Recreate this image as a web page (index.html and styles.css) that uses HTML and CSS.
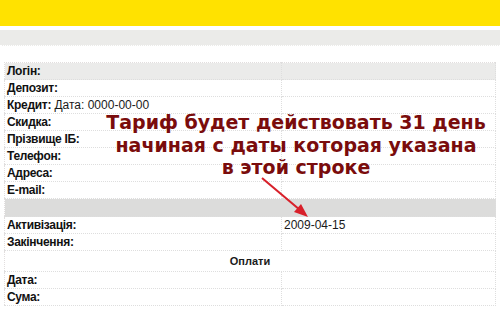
FILE: index.html
```html
<!DOCTYPE html>
<html>
<head>
  <meta charset="utf-8">
  <title></title>
  <link rel="stylesheet" href="styles.css">
</head>
<body>
  <div class="top"></div>
  <div class="bar"></div>

  <div class="wrap">
    <table class="info">
      <tr class="head"><td><b>Логін:</b></td><td></td></tr>
      <tr><td><b>Депозит:</b></td><td></td></tr>
      <tr><td><b>Кредит:</b> Дата: 0000-00-00</td><td></td></tr>
      <tr><td><b>Скидка:</b></td><td></td></tr>
      <tr><td><b>Прізвище ІБ:</b></td><td></td></tr>
      <tr><td><b>Телефон:</b></td><td></td></tr>
      <tr><td><b>Адреса:</b></td><td></td></tr>
      <tr><td><b>E-mail:</b></td><td></td></tr>
      <tr class="sep"><td colspan="2"></td></tr>
      <tr><td><b>Активізація:</b></td><td>2009-04-15</td></tr>
      <tr><td><b>Закінчення:</b></td><td></td></tr>
      <tr class="title"><td colspan="2">Оплати</td></tr>
      <tr><td><b>Дата:</b></td><td></td></tr>
      <tr><td><b>Сума:</b></td><td></td></tr>
    </table>

    <div class="note">Тариф будет действовать 31 день<br>начиная с даты которая указана<br>в этой строке</div>
    <svg class="arrow" width="60" height="50" viewBox="0 0 60 50">
      <line x1="4" y1="2" x2="42" y2="34" stroke="#d8202a" stroke-width="2"/>
      <polygon points="50,41 36,36 43,28" fill="#d8202a"/>
    </svg>
  </div>
</body>
</html>
```

FILE: styles.css
```css
* {
  margin: 0;
  padding: 0;
}
body {
  font-family: "Liberation Sans", Arial, sans-serif;
  font-size: 12px;
  color: #1a1a1a;
  background: #fff;
}
.top {
  height: 26px;
  background: #ffe200;
}
.bar {
  height: 15px;
  margin-top: 4px;
  background: #ebebe9;
  border-bottom: 1px dotted #fff;
}
.wrap {
  position: relative;
  padding: 16px 4px 0 4px;
}
.info {
  width: 492px;
  border-collapse: collapse;
  border: 1px dotted #e2dede;
}
.info td {
  height: 16px;
  padding: 0 2px;
  border-bottom: 1px dotted #dedede;
  border-right: 1px dotted #dedede;
  vertical-align: middle;
  line-height: 14px;
}
.info td:first-child {
  width: 272px;
}
.info b {
  color: #111;
  letter-spacing: -0.3px;
}
.head td {
  background: #ebebea;
}
.sep td {
  height: 17px;
  background: #dcdcdb;
}
.title td {
  height: 20px;
  text-align: center;
  font-weight: bold;
  font-size: 11px;
}
.note {
  position: absolute;
  left: 96px;
  top: 65px;
  width: 400px;
  text-align: center;
  font-family: "DejaVu Sans", Verdana, sans-serif;
  font-weight: bold;
  font-size: 19px;
  line-height: 22.5px;
  color: #7a0c0c;
}
.arrow {
  position: absolute;
  left: 258px;
  top: 130px;
}
```
